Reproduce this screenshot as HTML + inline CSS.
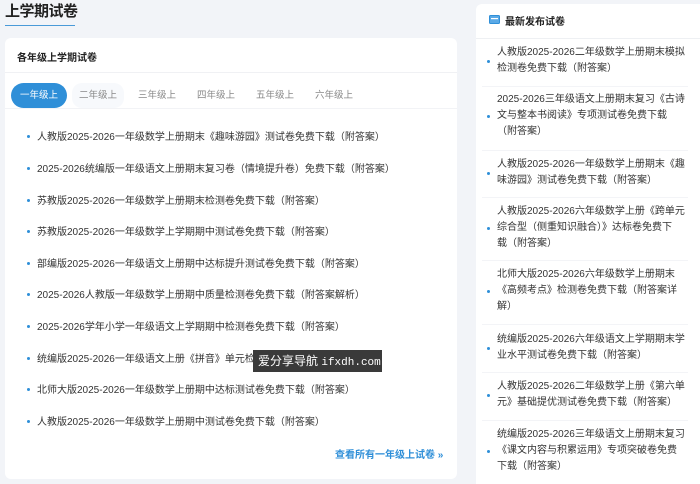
<!DOCTYPE html>
<html><head><meta charset="utf-8"><style>
*{margin:0;padding:0;box-sizing:border-box}
body{width:700px;height:482px;overflow:hidden;background:#f2f4f8;font-family:"Liberation Sans","Noto Sans CJK SC",sans-serif;color:#333;position:relative}
.abs{position:absolute;white-space:nowrap}
.title{left:5px;top:0px;font-size:15px;font-weight:bold;color:#222;letter-spacing:-0.5px}
.uline{left:5px;top:25px;width:70px;height:1px;background:#4a9ad8}
.card{position:absolute;background:#fff;border-radius:6px}
.l li{position:absolute;left:37px;list-style:none;font-size:10px;color:#333;white-space:nowrap}
.l li:before{content:"";position:absolute;left:-10px;top:7px;width:3px;height:3px;border-radius:50%;background:#2f8fd8}
.tab{position:absolute;top:83px;height:25px;line-height:25px;font-size:9.5px;color:#888;text-align:center}
.r div.it{position:absolute;left:497px;font-size:10px;line-height:16px;color:#333;white-space:nowrap}
.r div.it:before{content:"";position:absolute;left:-10px;top:50%;margin-top:-1px;width:3px;height:3px;border-radius:50%;background:#2f8fd8}
.sep{position:absolute;left:482px;width:206px;height:1px;background:#f3f4f7}
</style></head><body>
<div class="abs title">上学期试卷</div>
<div class="abs uline"></div>

<div class="card" style="left:5px;top:38px;width:452px;height:441px"></div>
<div class="abs" style="left:17px;top:49px;font-size:10px;font-weight:bold;color:#222">各年级上学期试卷</div>
<div class="abs" style="left:5px;top:72px;width:452px;height:1px;background:#f0f1f4"></div>
<div class="abs" style="left:5px;top:108px;width:452px;height:1px;background:#f2f3f6"></div>
<div class="tab" style="left:11px;width:56px;background:#2f8fd8;color:#fff;border-radius:13px">一年级上</div>
<div class="tab" style="left:72px;width:52px;background:#f7f9fc;border-radius:10px">二年级上</div>
<div class="tab" style="left:131px;width:52px">三年级上</div>
<div class="tab" style="left:190px;width:52px">四年级上</div>
<div class="tab" style="left:249px;width:52px">五年级上</div>
<div class="tab" style="left:308px;width:52px">六年级上</div>
<ul class="l">
<li style="top:128px">人教版2025-2026一年级数学上册期末《趣味游园》测试卷免费下载（附答案）</li>
<li style="top:160px">2025-2026统编版一年级语文上册期末复习卷（情境提升卷）免费下载（附答案）</li>
<li style="top:192px">苏教版2025-2026一年级数学上册期末检测卷免费下载（附答案）</li>
<li style="top:223px">苏教版2025-2026一年级数学上学期期中测试卷免费下载（附答案）</li>
<li style="top:255px">部编版2025-2026一年级语文上册期中达标提升测试卷免费下载（附答案）</li>
<li style="top:286px">2025-2026人教版一年级数学上册期中质量检测卷免费下载（附答案解析）</li>
<li style="top:318px">2025-2026学年小学一年级语文上学期期中检测卷免费下载（附答案）</li>
<li style="top:350px">统编版2025-2026一年级语文上册《拼音》单元检测卷免费下载（附答案）</li>
<li style="top:381px">北师大版2025-2026一年级数学上册期中达标测试卷免费下载（附答案）</li>
<li style="top:413px">人教版2025-2026一年级数学上册期中测试卷免费下载（附答案）</li>
</ul>
<div class="abs" style="left:335px;top:446px;font-size:10px;color:#2f8fd8;font-weight:bold">查看所有一年级上试卷 »</div>
<div class="abs" style="left:253px;top:350px;width:129px;height:22px;background:#3a3a3a;color:#fff;font-size:12px;line-height:22px;padding-left:5px">爱分享导航 <span style="font-family:'Liberation Mono',monospace;font-size:11px">ifxdh.com</span></div>

<div class="card r" style="left:476px;top:4px;width:224px;height:480px;border-radius:6px 0 0 0"></div>
<svg class="abs" style="left:489px;top:15px" width="11" height="9"><rect x="0.5" y="0.5" width="10" height="8" rx="1" fill="#5aa9e6" stroke="#2f8fd8"/><rect x="2" y="3" width="7" height="1.2" fill="#fff"/></svg>
<div class="abs" style="left:505px;top:13px;font-size:10px;font-weight:bold;color:#222">最新发布试卷</div>
<div class="abs" style="left:476px;top:38px;width:224px;height:1px;background:#eef0f3"></div>
<div class="r">
<div class="it" style="top:45px">人教版2025-2026二年级数学上册期末模拟<br>检测卷免费下载（附答案）</div>
<div class="sep" style="top:86px"></div>
<div class="it" style="top:92px">2025-2026三年级语文上册期末复习《古诗<br>文与整本书阅读》专项测试卷免费下载<br>（附答案）</div>
<div class="sep" style="top:150px"></div>
<div class="it" style="top:157px">人教版2025-2026一年级数学上册期末《趣<br>味游园》测试卷免费下载（附答案）</div>
<div class="sep" style="top:197px"></div>
<div class="it" style="top:204px">人教版2025-2026六年级数学上册《跨单元<br>综合型（侧重知识融合）》达标卷免费下<br>载（附答案）</div>
<div class="sep" style="top:260px"></div>
<div class="it" style="top:267px">北师大版2025-2026六年级数学上册期末<br>《高频考点》检测卷免费下载（附答案详<br>解）</div>
<div class="sep" style="top:324px"></div>
<div class="it" style="top:332px">统编版2025-2026六年级语文上学期期末学<br>业水平测试卷免费下载（附答案）</div>
<div class="sep" style="top:372px"></div>
<div class="it" style="top:379px">人教版2025-2026二年级数学上册《第六单<br>元》基础提优测试卷免费下载（附答案）</div>
<div class="sep" style="top:420px"></div>
<div class="it" style="top:427px">统编版2025-2026三年级语文上册期末复习<br>《课文内容与积累运用》专项突破卷免费<br>下载（附答案）</div>
</div>
</body></html>
